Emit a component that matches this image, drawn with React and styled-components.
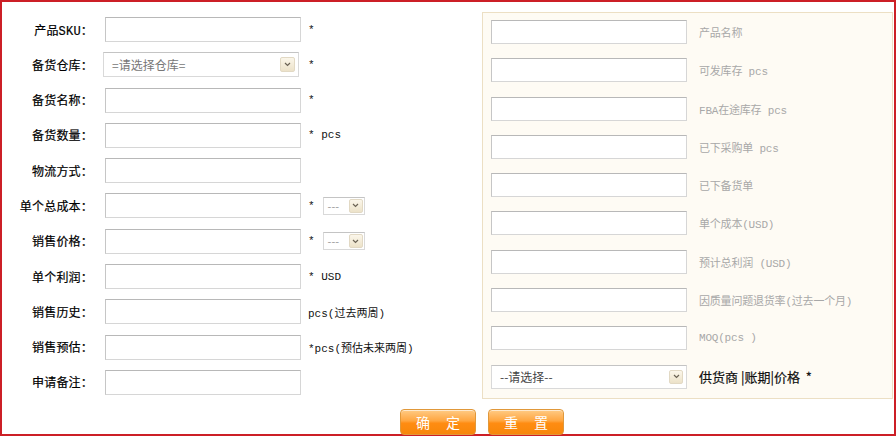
import React from "react";
import styled, { createGlobalStyle } from "styled-components";

const Global = createGlobalStyle`
  html, body { margin: 0; padding: 0; background: #fff; }
  body { font-family: "Noto Sans CJK SC", "Liberation Sans", sans-serif; font-size: 12px; color: #000; }
  * { box-sizing: border-box; }
`;

const Frame = styled.div`
  width: 896px;
  height: 436px;
  border: 2px solid #cc1f26;
  display: flex;
  flex-direction: column;
`;

const Body = styled.div`
  display: flex;
  align-items: flex-start;
`;

const LeftForm = styled.div`
  width: 480px;
  padding-top: 15px;
  display: grid;
  grid-template-columns: 91px 196px auto;
  column-gap: 12px;
  grid-auto-rows: 25px;
  row-gap: 10.3px;
  align-items: center;
`;

const Label = styled.div`
  text-align: right;
  font-size: 12px;
  color: #000;
  white-space: nowrap;
  font-family: "Liberation Mono", "Noto Sans CJK SC", monospace;
  letter-spacing: 0.2px;
  -webkit-text-stroke: 0.2px #000;
`;

const Input = styled.input`
  width: 196px;
  height: ${(p) => p.$h || 25}px;
  border: 1px solid #d6d6d6;
  border-top-color: #b8b8b8;
  border-left-color: #c6c6c6;
  background: #fff;
  padding: 0 4px;
  outline: none;
  margin: 0;
`;

const Suffix = styled.div`
  display: flex;
  align-items: center;
  gap: 8px;
  margin-left: -5px;
  font-family: "Liberation Mono", "Noto Sans CJK SC", monospace;
  font-size: 11px;
  color: #111;
  white-space: nowrap;
`;

const SelectBox = styled.div`
  width: ${(p) => p.$w}px;
  height: ${(p) => p.$h}px;
  margin-left: ${(p) => p.$ml || 0}px;
  border: 1px solid #d9d9d9;
  border-top-color: #c4c4c4;
  background: #fff;
  display: flex;
  align-items: center;
  justify-content: space-between;
  padding: 0 ${(p) => p.$pr || 3}px 0 ${(p) => p.$pl || 8}px;
  font-family: "Noto Sans CJK SC", sans-serif;
  font-size: ${(p) => p.$fs || 12}px;
  color: ${(p) => p.$color || "#777"};
`;

const Arrow = styled.span`
  width: ${(p) => p.$s || 15}px;
  height: ${(p) => p.$s || 15}px;
  border: 1px solid #e2d9c4;
  border-radius: 2px;
  background: linear-gradient(#fbf6ea, #ece2c9);
  display: flex;
  align-items: center;
  justify-content: center;
`;

const Chev = () => (
  <svg width="7" height="5" viewBox="0 0 7 5">
    <path d="M1 1 L3.5 3.5 L6 1" fill="none" stroke="#6b6355" strokeWidth="1.2" />
  </svg>
);

const RightPanel = styled.div`
  flex: 1;
  margin-top: 10px;
  margin-right: 1px;
  border: 1px solid #ecdfc4;
  background: #fefbf4;
  padding: 7px 8px 9px 8px;
  display: grid;
  grid-template-columns: 196px auto;
  column-gap: 12px;
  grid-auto-rows: 24px;
  row-gap: 14.3px;
  align-items: center;
`;

const Hint = styled.div`
  font-family: "Liberation Mono", "Noto Sans CJK SC", monospace;
  font-size: 11px;
  color: #a8a8a8;
  white-space: nowrap;
  letter-spacing: -0.2px;
`;

const Strong = styled.div`
  font-family: "Noto Sans CJK SC", sans-serif;
  font-size: 13px;
  color: #111;
  white-space: nowrap;
  -webkit-text-stroke: 0.2px #111;
`;

const ButtonRow = styled.div`
  display: flex;
  gap: 12px;
  padding-left: 398px;
  margin-top: 10px;
`;

const Button = styled.button`
  width: 76px;
  height: 26px;
  margin: 0;
  border: 1px solid #e0983a;
  border-radius: 4px;
  background: linear-gradient(#ffcb85 0%, #ffa640 45%, #ff8c12 55%, #f7870a 100%);
  box-shadow: inset 0 1px 0 rgba(255,255,255,0.6);
  color: #fff;
  font-family: "Noto Sans CJK SC", sans-serif;
  font-size: 14px;
  display: flex;
  align-items: center;
  justify-content: center;
  gap: 16px;
  padding: 0;
  cursor: pointer;
`;

const leftRows = [
  { label: "产品SKU：", suffix: "*" },
  { label: "备货仓库：", select: true, suffix: "*" },
  { label: "备货名称：", suffix: "*" },
  { label: "备货数量：", suffix: "* pcs" },
  { label: "物流方式：" },
  { label: "单个总成本：", suffix: "*", small: true },
  { label: "销售价格：", suffix: "*", small: true },
  { label: "单个利润：", suffix: "* USD" },
  { label: "销售历史：", suffix: "pcs(过去两周)" },
  { label: "销售预估：", suffix: "*pcs(预估未来两周)" },
  { label: "申请备注：" },
];

const rightRows = [
  "产品名称",
  "可发库存 pcs",
  "FBA在途库存 pcs",
  "已下采购单 pcs",
  "已下备货单",
  "单个成本(USD)",
  "预计总利润 (USD)",
  "因质量问题退货率(过去一个月)",
  "MOQ(pcs )",
];

export default function App() {
  return (
    <>
      <Global />
      <Frame>
        <Body>
          <LeftForm>
            {leftRows.map((r) => (
              <React.Fragment key={r.label}>
                <Label>{r.label}</Label>
                {r.select ? (
                  <SelectBox $w={196} $h={25} $ml={-2}>
                    <span>=请选择仓库=</span>
                    <Arrow $s={15}><Chev /></Arrow>
                  </SelectBox>
                ) : (
                  <Input />
                )}
                <Suffix>
                  {r.suffix && <span>{r.suffix}</span>}
                  {r.small && (
                    <SelectBox $w={42} $h={18} $pl={4} $pr={1} $color="#999" $fs={11}>
                      <span>---</span>
                      <Arrow $s={14}><Chev /></Arrow>
                    </SelectBox>
                  )}
                </Suffix>
              </React.Fragment>
            ))}
          </LeftForm>
          <RightPanel>
            {rightRows.map((t) => (
              <React.Fragment key={t}>
                <Input $h={24} />
                <Hint>{t}</Hint>
              </React.Fragment>
            ))}
            <SelectBox $w={196} $h={24} $color="#444">
              <span>--请选择--</span>
              <Arrow $s={14}><Chev /></Arrow>
            </SelectBox>
            <Strong>供货商 |账期|价格 &nbsp;*</Strong>
          </RightPanel>
        </Body>
        <ButtonRow>
          <Button type="button"><span>确</span><span>定</span></Button>
          <Button type="button"><span>重</span><span>置</span></Button>
        </ButtonRow>
      </Frame>
    </>
  );
}
